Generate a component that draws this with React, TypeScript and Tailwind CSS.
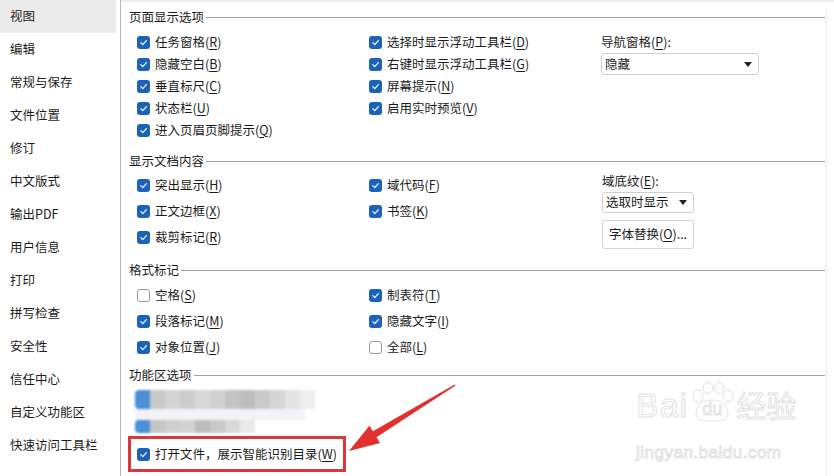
import React from "react"

const FONT = "font-['Noto_Sans_CJK_SC','Noto_Sans',sans-serif]"

const navItems = [
  "视图",
  "编辑",
  "常规与保存",
  "文件位置",
  "修订",
  "中文版式",
  "输出PDF",
  "用户信息",
  "打印",
  "拼写检查",
  "安全性",
  "信任中心",
  "自定义功能区",
  "快速访问工具栏",
]

type Opt = { label: string; key: string; checked?: boolean; tail?: string }

function Checkbox({ checked = true }: { checked?: boolean }) {
  if (!checked) {
    return <span className="block w-[13px] h-[13px] shrink-0 rounded-[3px] border border-[#9a9a9a] bg-white" />
  }
  return (
    <span className="flex items-center justify-center w-[13px] h-[13px] shrink-0 rounded-[3px] bg-[#1b62b8]">
      <svg width="9" height="9" viewBox="0 0 10 10" fill="none">
        <path d="M2 5.2 L4.2 7.3 L8.2 2.8" stroke="#fff" strokeWidth="1.3" strokeLinecap="round" strokeLinejoin="round" />
      </svg>
    </span>
  )
}

// label with underlined access key, e.g. 任务窗格(R)
function Label({ label, k, tail = "" }: { label: string; k: string; tail?: string }) {
  return (
    <span className="whitespace-nowrap">
      {label}(<span className="underline underline-offset-2">{k}</span>){tail}
    </span>
  )
}

function CheckRow({ opt, h }: { opt: Opt; h: string }) {
  return (
    <div className={`flex items-center gap-[5px] ${h}`}>
      <Checkbox checked={opt.checked !== false} />
      <Label label={opt.label} k={opt.key} tail={opt.tail} />
    </div>
  )
}

function SectionHeader({ title, className = "" }: { title: string; className?: string }) {
  return (
    <div className={`flex items-center h-[18px] ${className}`}>
      <span className="whitespace-nowrap">{title}</span>
      <div className="flex-1 h-px bg-[#a3a3a3] ml-[2px]" />
    </div>
  )
}

function Select({ value, className }: { value: string; className: string }) {
  return (
    <div className={`flex items-center justify-between rounded-[3px] border border-[#cfcfcf] bg-white pl-[3px] pr-[6px] ${className}`}>
      <span>{value}</span>
      <svg width="8" height="5" viewBox="0 0 8 5">
        <path d="M0 0 L8 0 L4 5 Z" fill="#222" />
      </svg>
    </div>
  )
}

const sec1a: Opt[] = [
  { label: "任务窗格", key: "R" },
  { label: "隐藏空白", key: "B" },
  { label: "垂直标尺", key: "C" },
  { label: "状态栏", key: "U" },
  { label: "进入页眉页脚提示", key: "Q" },
]
const sec1b: Opt[] = [
  { label: "选择时显示浮动工具栏", key: "D" },
  { label: "右键时显示浮动工具栏", key: "G" },
  { label: "屏幕提示", key: "N" },
  { label: "启用实时预览", key: "V" },
]
const sec2a: Opt[] = [
  { label: "突出显示", key: "H" },
  { label: "正文边框", key: "X" },
  { label: "裁剪标记", key: "R" },
]
const sec2b: Opt[] = [
  { label: "域代码", key: "F" },
  { label: "书签", key: "K" },
]
const sec3a: Opt[] = [
  { label: "空格", key: "S", checked: false },
  { label: "段落标记", key: "M" },
  { label: "对象位置", key: "J" },
]
const sec3b: Opt[] = [
  { label: "制表符", key: "T" },
  { label: "隐藏文字", key: "I" },
  { label: "全部", key: "L", checked: false },
]

// pixelated (blurred) region in the ribbon options
const blurTop = ["#c9c9c9", "#d4d4d4", "#cdcdcd", "#d8d8d8", "#d0d0d0", "#c4c4c4", "#bdbdbd", "#cacaca", "#d6d6d6", "#e4e4e4", "#eeeeee"]
const blurBottom = ["#c6c6c6", "#cfcfcf", "#d2d2d2", "#bdbdbd", "#c9c9c9", "#d8d8d8", "#e9e9e9"]

export default function App() {
  return (
    <div className={`relative flex w-[834px] h-[476px] overflow-hidden bg-white text-[12.5px] leading-none text-[#1b1b1b] ${FONT}`}>
      {/* sidebar */}
      <div className="w-[121px] shrink-0 border-r border-[#b5b5b5] pr-[4px]">
        {navItems.map((item, i) => (
          <div key={item} className={`flex items-center h-[33px] pl-[10px] ${i === 0 ? "bg-[#ececec]" : ""}`}>
            {item}
          </div>
        ))}
      </div>

      {/* content */}
      <div className="flex-1 border-t-2 border-[#eeeeee]">
        <div className="w-[706px] border-r border-[#eeeeee] h-full pl-[8px] pr-[1px]">
          {/* 页面显示选项 */}
          <SectionHeader title="页面显示选项" className="mt-[6px]" />
          <div className="flex mt-[5px] pl-[8px]">
            <div className="w-[232px]">
              {sec1a.map((o) => <CheckRow key={o.label} opt={o} h="h-[22px]" />)}
            </div>
            <div className="w-[232px]">
              {sec1b.map((o) => <CheckRow key={o.label} opt={o} h="h-[22px]" />)}
            </div>
            <div className="flex flex-col">
              <div className="flex items-center h-[22px]">
                <Label label="导航窗格" k="P" tail=":" />
              </div>
              <Select value="隐藏" className="w-[158px] h-[22px]" />
            </div>
          </div>

          {/* 显示文档内容 */}
          <SectionHeader title="显示文档内容" className="mt-[11px]" />
          <div className="flex mt-[2px] pl-[8px]">
            <div className="w-[232px]">
              {sec2a.map((o) => <CheckRow key={o.label} opt={o} h="h-[26px]" />)}
            </div>
            <div className="w-[233px]">
              {sec2b.map((o) => <CheckRow key={o.label} opt={o} h="h-[26px]" />)}
            </div>
            <div className="flex flex-col">
              <div className="flex items-center h-[18px]">
                <Label label="域底纹" k="E" tail=":" />
              </div>
              <Select value="选取时显示" className="w-[92px] h-[21px] mt-[2px]" />
              <div className="flex items-center justify-center w-[92px] h-[29px] mt-[7px] rounded-[3px] border border-[#d2d2d2] bg-white">
                <Label label="字体替换" k="O" tail="..." />
              </div>
            </div>
          </div>

          {/* 格式标记 */}
          <SectionHeader title="格式标记" className="mt-[11px]" />
          <div className="flex mt-[3px] pl-[8px]">
            <div className="w-[232px]">
              {sec3a.map((o) => <CheckRow key={o.label} opt={o} h="h-[26px]" />)}
            </div>
            <div className="w-[232px]">
              {sec3b.map((o) => <CheckRow key={o.label} opt={o} h="h-[26px]" />)}
            </div>
          </div>

          {/* 功能区选项 */}
          <SectionHeader title="功能区选项" className="mt-[6px]" />
          <div className="mt-[6px] ml-[6px] blur-[1px]">
            <div className="flex h-[19px]">
              <div className="w-[15px] bg-[#4d8fd6] rounded-l-[4px]" />
              {blurTop.map((c, i) => (
                <div key={i} className="w-[15px]" style={{ backgroundColor: c }} />
              ))}
            </div>
            <div className="h-[11px] w-[170px] bg-[#f1f3f6]" />
            <div className="flex h-[13px]">
              <div className="w-[15px] bg-[#4d8fd6] rounded-l-[4px]" />
              {blurBottom.map((c, i) => (
                <div key={i} className="w-[15px]" style={{ backgroundColor: c }} />
              ))}
            </div>
          </div>

          <div className="flex items-center gap-[5px] w-[218px] h-[36px] mt-[3px] -ml-px border-[3px] border-[#d9393b] pl-[6px]">
            <Checkbox />
            <Label label="打开文件，展示智能识别目录" k="W" />
          </div>
          <div className="flex items-center gap-[5px] h-[22px] mt-[2px] pl-[8px]">
            <Checkbox />
          </div>
        </div>
      </div>

      {/* red annotation arrow */}
      <svg className="absolute left-0 top-0 pointer-events-none" width="834" height="476">
        <polygon
          points="349,451 380,443 376.5,437.3 455.6,385.4 454.6,384.6 372.9,431.3 369.4,425.8"
          fill="#e2302f"
        />
      </svg>

      {/* watermark */}
      <div className="absolute left-[636px] top-[382px] pointer-events-none font-['Liberation_Sans','Noto_Sans_CJK_SC',sans-serif] text-white [-webkit-text-stroke:1px_#e2e2e2]">
        <div className="flex items-end h-[40px]">
          <span className="text-[34px] leading-none tracking-[1px]">Bai</span>
          <span className="relative flex items-end justify-center w-[48px] h-[40px]">
            <svg className="absolute left-0 top-0" width="48" height="40" viewBox="0 0 48 40" fill="none" stroke="#e2e2e2" strokeWidth="1">
              <ellipse cx="10" cy="14" rx="5" ry="6" />
              <ellipse cx="20" cy="6" rx="5" ry="5.5" />
              <ellipse cx="31" cy="6" rx="5" ry="5.5" />
              <ellipse cx="40" cy="14" rx="5" ry="6" />
              <path d="M8 32 C8 22 16 18 24 18 C32 18 40 22 40 32 C40 38 34 39 24 39 C14 39 8 38 8 32 Z" />
            </svg>
            <span className="relative text-[18px] leading-none mb-[4px]">du</span>
          </span>
          <span className="text-[30px] leading-none">经验</span>
        </div>
        <div className="mt-[22px] text-[17px] leading-none tracking-[0.5px]">jingyan.baidu.com</div>
      </div>
    </div>
  )
}
